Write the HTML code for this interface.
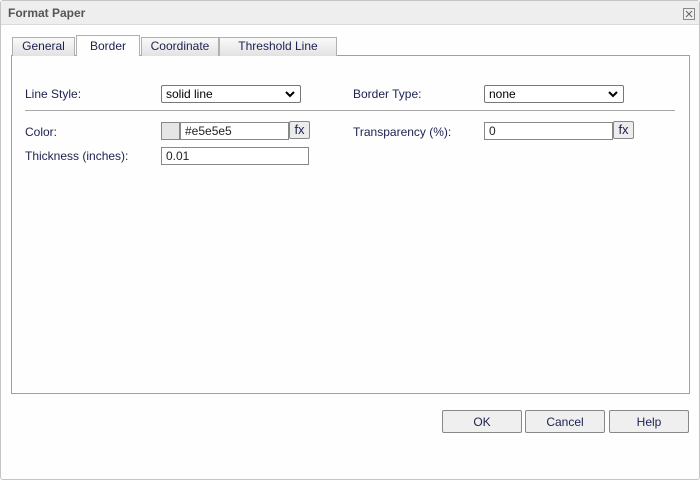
<!DOCTYPE html>
<html><head><style>
*{box-sizing:border-box;margin:0;padding:0}
body{width:700px;height:480px;background:#fff;font-family:"Liberation Sans",sans-serif;font-size:12px;color:#1c2150;position:relative;overflow:hidden}
.win{position:absolute;left:0;top:0;width:700px;height:480px;border:1px solid #c4c4c4;border-radius:3px;background:#fdfefd}
.title{position:absolute;left:0;top:0;width:698px;height:24px;background:#eeeeee;border-bottom:1px solid #dadada;font-weight:bold;color:#555;font-size:12px;line-height:24px;padding-left:7px}
.close{position:absolute;left:682px;top:7px}
.a{position:absolute}
.tab{position:absolute;top:37px;height:19px;border:1px solid #b0b0b0;border-bottom:none;background:linear-gradient(#fafafa,#e2e2e2);text-align:center;line-height:17px;font-size:12px}
.panel{position:absolute;left:11px;top:55px;width:679px;height:339px;border:1px solid #a0a0a0;background:#fdfefd}
.sel{position:absolute;height:18px;border:1px solid #777;border-radius:2px;background:#fff;padding-left:4px;line-height:16px;color:#000}
.sel svg{position:absolute;right:5px;top:5px}
.inp{position:absolute;height:18px;border:1px solid #888;background:#fff;padding-left:4px;line-height:16px;color:#222}
.fx{position:absolute;height:18px;width:21px;border:1px solid #888;border-radius:2px;background:#ececec;text-align:center;line-height:15px;font-size:13px}
.btn{position:absolute;top:410px;width:80px;height:23px;border:1px solid #888;border-radius:2px;background:#efefef;text-align:center;line-height:22px;color:#1c2150}
</style></head><body>
<div class="win">
<div class="title">Format Paper</div>
<svg class="close" width="12" height="12"><rect x="0.5" y="0.5" width="11" height="11" fill="none" stroke="#888"/><path d="M3 3L9 9M9 3L3 9" stroke="#666" stroke-width="1"/></svg>
</div>
<div class="panel"></div>
<div class="tab" style="left:12px;width:63px">General</div>
<div class="tab" style="left:76px;width:64px;top:35px;height:21px;background:#fdfefd;line-height:21px">Border</div>
<div class="tab" style="left:141px;width:78px">Coordinate</div>
<div class="tab" style="left:219px;width:118px">Threshold Line</div>

<div class="a" style="left:25px;top:87px">Line Style:</div>
<div class="sel" style="left:161px;top:85px;width:140px">solid line<svg width="10" height="7"><path d="M1 1L5 5L9 1" stroke="#000" stroke-width="2" fill="none"/></svg></div>
<div class="a" style="left:353px;top:87px">Border Type:</div>
<div class="sel" style="left:484px;top:85px;width:140px">none<svg width="10" height="7"><path d="M1 1L5 5L9 1" stroke="#000" stroke-width="2" fill="none"/></svg></div>
<div class="a" style="left:25px;top:110px;width:650px;height:1px;background:#a8a8a8"></div>

<div class="a" style="left:25px;top:125px">Color:</div>
<div class="a" style="left:161px;top:122px;width:19px;height:18px;border:1px solid #888;background:#e5e5e5"></div>
<div class="inp" style="left:180px;top:122px;width:109px">#e5e5e5</div>
<div class="fx" style="left:289px;top:121px">fx</div>
<div class="a" style="left:353px;top:125px">Transparency (%):</div>
<div class="inp" style="left:484px;top:122px;width:129px">0</div>
<div class="fx" style="left:613px;top:121px">fx</div>

<div class="a" style="left:25px;top:149px">Thickness (inches):</div>
<div class="inp" style="left:161px;top:147px;width:148px">0.01</div>

<div class="btn" style="left:442px">OK</div>
<div class="btn" style="left:525px">Cancel</div>
<div class="btn" style="left:609px">Help</div>
</body></html>
